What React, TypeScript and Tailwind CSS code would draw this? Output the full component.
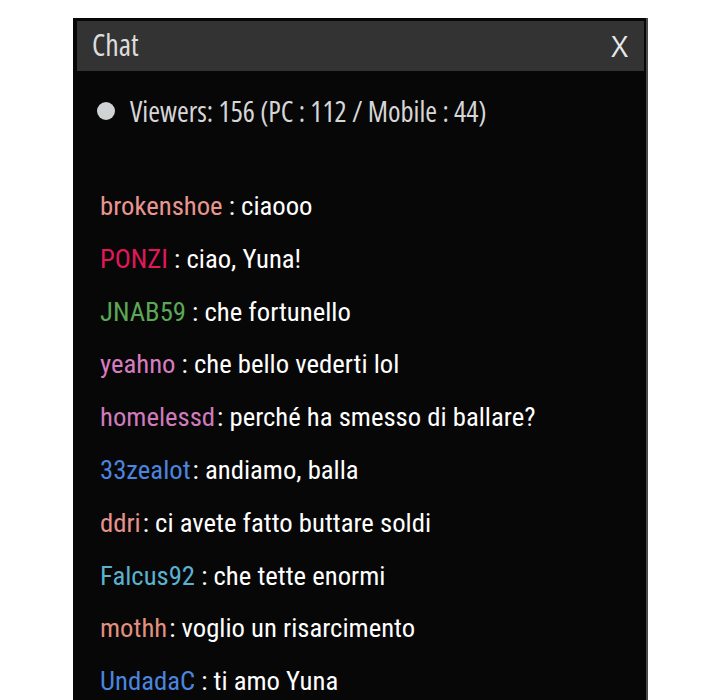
import React from 'react';

interface ChatLine {
  name: string;
  color: string;
  text: string;
  tight?: boolean;
}

const lines: ChatLine[] = [
  { name: 'brokenshoe', color: 'text-[#e8968f]', text: 'ciaooo' },
  { name: 'PONZI', color: 'text-[#e3175a]', text: 'ciao, Yuna!' },
  { name: 'JNAB59', color: 'text-[#5aa856]', text: 'che fortunello' },
  { name: 'yeahno', color: 'text-[#d77cc1]', text: 'che bello vederti lol' },
  { name: 'homelessd', color: 'text-[#d07bbd]', text: 'perché ha smesso di ballare?', tight: true },
  { name: '33zealot', color: 'text-[#4a85df]', text: 'andiamo, balla', tight: true },
  { name: 'ddri', color: 'text-[#e8928b]', text: 'ci avete fatto buttare soldi', tight: true },
  { name: 'Falcus92', color: 'text-[#5ab2cf]', text: 'che tette enormi' },
  { name: 'mothh', color: 'text-[#e2907f]', text: 'voglio un risarcimento', tight: true },
  { name: 'UndadaC', color: 'text-[#4a85df]', text: 'ti amo Yuna' },
];

const narrow = "font-['Open_Sans',sans-serif] [font-stretch:75%]";
const chatFont = "font-['Roboto',sans-serif] [font-stretch:75%]";

const App: React.FC = () => {
  return (
    <div className="h-[700px] overflow-hidden bg-white pt-[18px] pl-[73px]">
      <div className="w-[575px] h-[700px] bg-[#070707] pt-[3px] pl-[4px] pr-[2px] border-r-2 border-[#4a4a4a]">
        <header className="h-[50px] bg-[#333333] flex items-center justify-between pl-[15px] pr-[16px]">
          <h1 className={`text-[30px] font-medium text-[#dcdcdc] leading-none -mt-[2px] ${narrow}`}>Chat</h1>
          <span className="font-['Open_Sans',sans-serif] text-[29px] text-[#e8e8e8] leading-none -mt-[2px]">X</span>
        </header>

        <div className={`flex items-center pl-[20px] mt-[22px] h-[36px] ${narrow}`}>
          <span className="w-[18px] h-[18px] rounded-full bg-[#cfd3d4]" />
          <span className="ml-[15px] text-[28.5px] font-medium text-[#d6d6d6] leading-[36px]">
            Viewers: 156 (PC : 112 / Mobile : 44)
          </span>
        </div>

        <ul className={`mt-[51px] pl-[23px] ${chatFont}`}>
          {lines.map((l) => (
            <li key={l.name} className="h-[52.8px] leading-[52.8px] text-[26.7px] text-white whitespace-nowrap">
              <span className={l.color}>{l.name}</span>
              {l.tight ? <span className="ml-[2px]">: {l.text}</span> : <span> : {l.text}</span>}
            </li>
          ))}
        </ul>
      </div>
    </div>
  );
};

export default App;
